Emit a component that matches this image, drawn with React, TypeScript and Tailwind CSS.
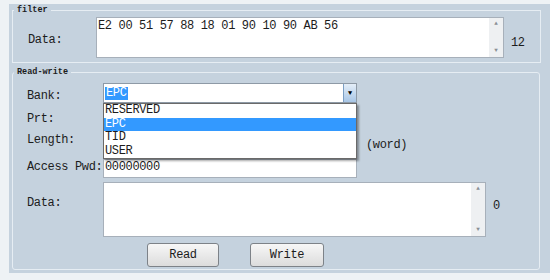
const bankOptions = ["RESERVED", "EPC", "TID", "USER"];

function ScrollBar() {
  return (
    <div className="flex w-[14px] shrink-0 flex-col items-center justify-between bg-[#eef0f2] py-[3px] text-[6px] leading-[6px] text-[#8a8f95]">
      <span>▲</span>
      <span>▼</span>
    </div>
  );
}

function TextArea({ text, w, h }: { text?: string; w: string; h: string }) {
  return (
    <div className={`flex ${w} ${h} border border-[#a7b0ba] bg-white`}>
      <div className="flex-1 px-[1px] pt-[1px] leading-[14px]">{text}</div>
      <ScrollBar />
    </div>
  );
}

export default function App() {
  return (
    <div
      className="h-[280px] w-[550px] overflow-hidden bg-[#eef2f5] pl-[9px] pt-[4px] text-[12px] tracking-[-0.35px] text-[#1c1c1c]"
      style={{ fontFamily: '"Liberation Mono", "Courier New", monospace' }}
    >
      <div className="h-[269px] w-[541px] bg-[#c5d2de] pl-[3px] pt-[1px]">
        {/* filter group */}
        <fieldset className="w-[529px] border border-[#e6edf3] p-0">
          <legend className="ml-[1px] px-[3px] text-[8.5px] font-bold leading-[10px] tracking-normal">
            filter
          </legend>
          <div className="mt-[2px] flex items-start pb-[4px] pl-[15px]">
            <div className="w-[68px] pt-[16px] leading-[14px]">Data:</div>
            <TextArea text="E2 00 51 57 88 18 01 90 10 90 AB 56" w="w-[408px]" h="h-[41px]" />
            <div className="ml-[7px] pt-[19px] leading-[14px]">12</div>
          </div>
        </fieldset>

        {/* read-write group */}
        <fieldset className="mt-[4px] w-[528px] rounded-[3px] border border-[#e6edf3] p-0">
          <legend className="ml-[1px] px-[3px] text-[8.5px] font-bold leading-[10px] tracking-normal">
            Read-write
          </legend>
          <div className="flex flex-col pb-[2px] pl-[14px]">
            {/* Bank */}
            <div className="mt-[6px] flex h-[22px] items-start">
              <div className="w-[76px] pt-[6px] leading-[14px]">Bank:</div>
              <div className="relative h-[20px] w-[254px]">
                <div className="flex h-full w-full border border-[#8e9aa6] bg-white">
                  <div className="flex flex-1 items-center pl-[1px]">
                    <span className="bg-[#3399ff] px-[1px] leading-[13px] text-white">EPC</span>
                  </div>
                  <div className="flex w-[13px] items-center justify-center border-l border-[#7c9fc4] bg-gradient-to-b from-[#e4eef8] to-[#a8c6e6] text-[7px] text-black">
                    ▼
                  </div>
                </div>
                {/* open list */}
                <div className="absolute left-0 top-[20px] z-10 w-[254px] border border-[#6a6a6a] bg-white shadow-[2px_2px_2px_rgba(0,0,0,0.35)]">
                  {bankOptions.map((o) => (
                    <div
                      key={o}
                      className={
                        o === "EPC"
                          ? "h-[13.5px] bg-[#3399ff] pl-[1px] leading-[13.5px] text-white"
                          : "h-[13.5px] pl-[1px] leading-[13.5px]"
                      }
                    >
                      {o}
                    </div>
                  ))}
                </div>
              </div>
            </div>

            {/* Prt */}
            <div className="flex h-[21px] items-start">
              <div className="w-[76px] pt-[7px] leading-[14px]">Prt:</div>
              <div className="h-[20px] w-[254px] border border-[#a7b0ba] bg-white" />
            </div>

            {/* Length */}
            <div className="flex h-[31px] items-start">
              <div className="w-[76px] pt-[7px] leading-[14px]">Length:</div>
              <div className="mt-[9px] h-[20px] w-[254px] border border-[#a7b0ba] bg-white" />
              <div className="ml-[9px] pt-[12px] leading-[14px]">(word)</div>
            </div>

            {/* Access Pwd */}
            <div className="flex h-[22px] items-start">
              <div className="w-[76px] pt-[3px] leading-[14px]">Access Pwd:</div>
              <div className="mt-[2px] h-[19px] w-[254px] border border-[#a7b0ba] bg-white pl-[1px] leading-[14px]">
                00000000
              </div>
            </div>

            {/* Data */}
            <div className="flex items-start">
              <div className="w-[76px] pt-[17px] leading-[14px]">Data:</div>
              <div className="mt-[3px]">
                <TextArea w="w-[383px]" h="h-[55px]" />
              </div>
              <div className="ml-[7px] pt-[20px] leading-[14px]">0</div>
            </div>

            {/* buttons */}
            <div className="mt-[6px] flex gap-[31px] pl-[120px]">
              <button className="h-[24px] w-[72px] rounded-[3px] border border-[#7d8288] bg-gradient-to-b from-[#f7f7f7] to-[#dcdcdc] leading-[14px]">
                Read
              </button>
              <button className="h-[24px] w-[74px] rounded-[3px] border border-[#7d8288] bg-gradient-to-b from-[#f7f7f7] to-[#dcdcdc] leading-[14px]">
                Write
              </button>
            </div>
          </div>
        </fieldset>
      </div>
    </div>
  );
}
